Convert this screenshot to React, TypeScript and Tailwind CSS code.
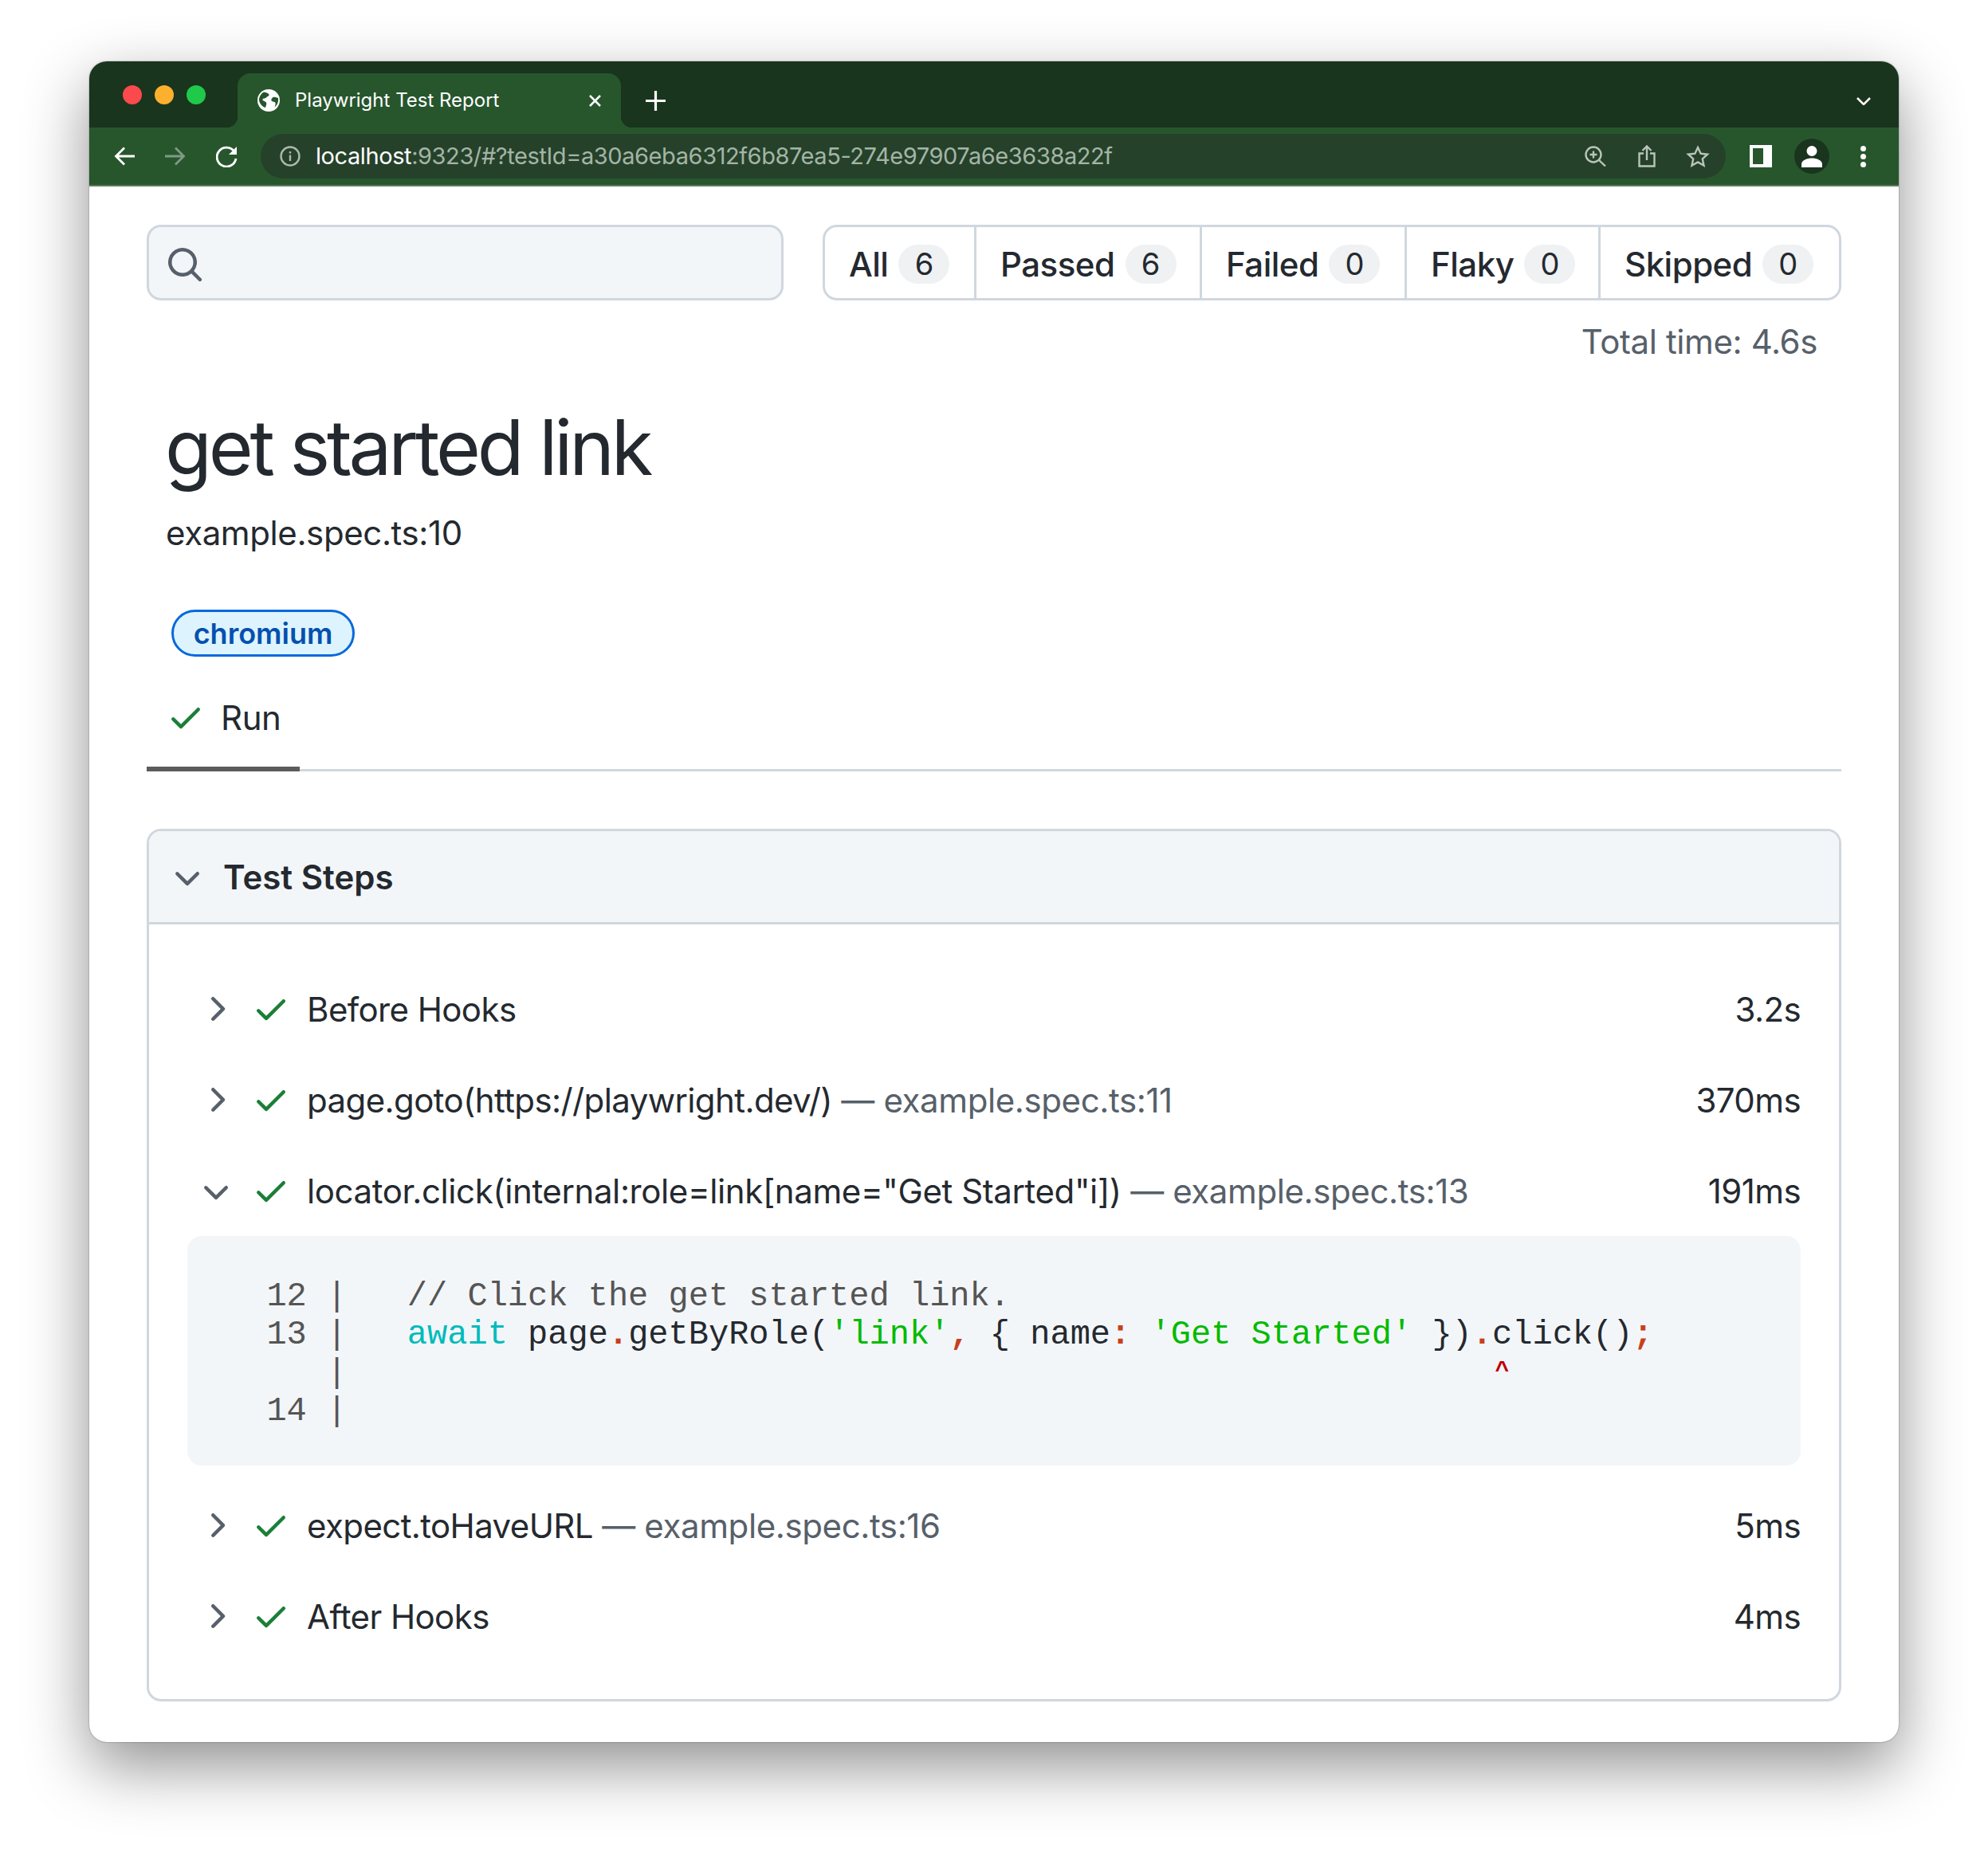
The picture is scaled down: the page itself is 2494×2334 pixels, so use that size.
const SANS = "font-['Inter','Noto_Sans',sans-serif]";

const checkPath =
  "M13.78 4.22a.75.75 0 010 1.06l-7.25 7.25a.75.75 0 01-1.06 0L2.22 9.28a.75.75 0 011.06-1.06L6 10.94l6.72-6.72a.75.75 0 011.06 0z";
const chevronRightPath =
  "M6.22 3.22a.75.75 0 011.06 0l4.25 4.25a.75.75 0 010 1.06l-4.25 4.25a.75.75 0 01-1.06-1.06L9.94 8 6.22 4.28a.75.75 0 010-1.06z";
const chevronDownPath =
  "M12.78 6.22a.75.75 0 010 1.06l-4.25 4.25a.75.75 0 01-1.06 0L3.22 7.28a.75.75 0 011.06-1.06L8 9.94l3.72-3.72a.75.75 0 011.06 0z";
const searchPath =
  "M11.5 7a4.5 4.5 0 11-9 0 4.5 4.5 0 019 0zm-.82 4.74a6 6 0 111.06-1.06l3.04 3.04a.75.75 0 11-1.06 1.06l-3.04-3.04z";

const Octicon = ({ d, className }: { d: string; className: string }) => (
  <svg viewBox="0 0 16 16" fill="currentColor" className={`h-12 w-12 shrink-0 ${className}`}>
    <path fillRule="evenodd" d={d} />
  </svg>
);

const filters = [
  { label: "All", count: 6, width: "w-[187px]" },
  { label: "Passed", count: 6, width: "w-[283px]" },
  { label: "Failed", count: 0, width: "w-[257px]" },
  { label: "Flaky", count: 0, width: "w-[243px]" },
  { label: "Skipped", count: 0, width: "flex-1" },
];

const BrowserChrome = () => (
  <div className={`shrink-0 ${SANS}`}>
    <div className="flex h-[83px] bg-[#19351d]">
      <div className="flex h-[84px] w-[186px] shrink-0 items-center gap-4 pl-[42px]">
        <span className="h-6 w-6 rounded-full bg-[#fb4a4e]" />
        <span className="h-6 w-6 rounded-full bg-[#fdb02e]" />
        <span className="h-6 w-6 rounded-full bg-[#1fc94a]" />
      </div>
      <div className="relative mt-[15px] flex h-[68px] w-[481px] items-center rounded-t-[16px] bg-[#27562d] pl-[25px] pr-6 text-white">
        <span className="absolute bottom-0 left-[-14px] h-[14px] w-[14px] bg-[radial-gradient(circle_at_0_0,#19351d_14px,#27562d_14.5px)]" />
        <span className="absolute bottom-0 right-[-14px] h-[14px] w-[14px] bg-[radial-gradient(circle_at_100%_0,#19351d_14px,#27562d_14.5px)]" />
        <svg viewBox="0 0 28 28" className="h-7 w-7 shrink-0">
          <circle cx="14" cy="14" r="14" fill="#fff" />
          <path d="M8 3.500c3 .5 5 1 6.500 3 .5 2-1.500 2-3 3.500-1.500 2-4 1-5 2.500-.5 2 3 2.500 4.500 4 1 2-.5 4-1 6.500-4-1-7.500-5-8-9.500C2 9.500 4.500 5.500 8 3.500z" fill="#27562d" />
          <path d="M26 11c-2-.5-4-2-6.500-1-1.500 1.500-3 3-1.500 5 2 1 4 .5 4.500 2 .5 2-.5 4-1 5.500 2.500-2 5-5 4.500-11.500z" fill="#27562d" />
        </svg>
        <span className="ml-[19px] whitespace-nowrap text-[24px]">Playwright Test Report</span>
        <svg viewBox="0 0 17 15" className="ml-auto h-[15px] w-[17px]" stroke="#fff" strokeWidth="2.500">
          <path d="M2 1l13 13M15 1L2 14" />
        </svg>
      </div>
      <svg viewBox="0 0 25 25" className="ml-[31px] mt-[37px] h-[25px] w-[25px]" stroke="#fff" strokeWidth="3.200">
        <path d="M12.500 0v25M0 12.500h25" />
      </svg>
      <svg viewBox="0 0 18 10" fill="none" className="ml-auto mr-[35px] mt-[45px] h-[10px] w-[18px]" stroke="#fff" strokeWidth="2.500">
        <path d="M1 1l8 8 8-8" />
      </svg>
    </div>
    <div className="flex h-[74px] items-center border-b-2 border-[#5b7a5f] bg-[#27562d] pl-[31px]">
      <svg viewBox="0 0 26 24" fill="none" className="h-6 w-[26px] shrink-0" stroke="#fff" strokeWidth="2.800">
        <path d="M26 12H3M13 1.500L2.500 12 13 22.500" />
      </svg>
      <svg viewBox="0 0 26 24" fill="none" className="ml-[38px] h-6 w-[26px] shrink-0" stroke="#7f9a83" strokeWidth="2.800">
        <path d="M0 12h23M13 1.500L23.500 12 13 22.500" />
      </svg>
      <svg viewBox="0 0 27 27" fill="none" className="ml-[38px] h-[27px] w-[27px] shrink-0">
        <path d="M22.500 6.500A12 12 0 1 0 25 16" stroke="#fff" strokeWidth="2.800" />
        <path d="M26 1v10H16z" fill="#fff" />
      </svg>
      <div className="ml-[29px] flex h-14 w-[1838px] shrink-0 items-center rounded-full bg-[#26412a] pl-6 pr-5">
        <svg viewBox="0 0 26 26" fill="none" className="h-[26px] w-[26px] shrink-0" stroke="#aab9ad" strokeWidth="2.400">
          <circle cx="13" cy="13" r="11.500" />
          <path d="M13 11.500v7.500M13 7v2.500" />
        </svg>
        <span className="ml-[19px] whitespace-nowrap text-[29px] tracking-[-0.42px] text-[#a3b5a6]">
          <span className="text-white">localhost</span>:9323/#?testId=a30a6eba6312f6b87ea5-274e97907a6e3638a22f
        </span>
        <svg viewBox="0 0 27 26" fill="none" className="ml-auto h-[26px] w-[27px] shrink-0" stroke="#b9c5bb" strokeWidth="2.400">
          <circle cx="11" cy="11" r="9.500" />
          <path d="M17.500 17.500L26 25.500M11 6.500v9M6.500 11h9" />
        </svg>
        <svg viewBox="0 0 22 28" fill="none" className="ml-10 h-7 w-[22px] shrink-0" stroke="#b9c5bb" strokeWidth="2.400">
          <path d="M7 10.500H1.500v16h19v-16H15M11 19V2M5.500 7L11 1.500 16.500 7" />
        </svg>
        <svg viewBox="0 0 30 28" fill="none" className="ml-[38px] h-7 w-[30px] shrink-0" stroke="#b9c5bb" strokeWidth="2.400">
          <path d="M15 3l3.600 7.700 8.400 1-6.200 5.700 1.700 8.300-7.500-4.200-7.500 4.200 1.700-8.300L3 11.700l8.400-1z" />
        </svg>
      </div>
      <span className="ml-[30px] h-7 w-7 shrink-0 bg-white py-1 pl-1">
        <span className="block h-full w-[13px] bg-[#27562d]" />
      </span>
      <span className="ml-7 flex h-11 w-11 shrink-0 items-center justify-center rounded-full bg-[#19351d]">
        <svg viewBox="0 0 26 28" fill="#fff" className="h-7 w-[26px]">
          <circle cx="13" cy="7.500" r="6.500" />
          <path d="M0 28v-4c0-5 7-7.500 13-7.500s13 2.500 13 7.500v4z" />
        </svg>
      </span>
      <span className="ml-[39px] flex flex-col gap-[3px]">
        <span className="h-[7px] w-[7px] rounded-full bg-white" />
        <span className="h-[7px] w-[7px] rounded-full bg-white" />
        <span className="h-[7px] w-[7px] rounded-full bg-white" />
      </span>
    </div>
  </div>
);

const FilterBar = () => (
  <div className="flex gap-[49px]">
    <div className="flex h-[95px] w-[799px] items-center rounded-[18px] border-[3px] border-[#d0d7de] bg-[#f3f6f9] pl-[21px] pt-1 text-[#57606a]">
      <Octicon d={searchPath} className="" />
    </div>
    <div className="flex h-[95px] flex-1 rounded-[18px] border-[3px] border-[#d0d7de]">
      {filters.map((filter, index) => (
        <div
          key={filter.label}
          className={`flex items-center pl-[30px] pt-1 ${filter.width} ${index > 0 ? "border-l-[3px] border-[#d0d7de]" : ""}`}
        >
          <span className="text-[42px] font-medium tracking-[-0.5px] text-[#24292f]">{filter.label}</span>
          <span className="ml-[13px] flex h-[49px] w-[64px] items-center justify-center rounded-full bg-[#eff1f3] text-[38px] text-[#24292f]">
            {filter.count}
          </span>
        </div>
      ))}
    </div>
  </div>
);

interface IStepRow {
  title: string;
  location?: string;
  time: string;
  open?: boolean;
}

const StepRow = ({ title, location, time, open }: IStepRow) => (
  <div className="flex h-[114px] items-center pl-3 tracking-[-0.6px]">
    <Octicon d={open ? chevronDownPath : chevronRightPath} className="text-[#57606a]" />
    <Octicon d={checkPath} className="ml-[21px] text-[#1a7f37]" />
    <span className={`ml-[21px] whitespace-nowrap ${open ? "tracking-[-0.4px]" : ""}`}>
      {title}
      {location && <span className="tracking-[-0.4px] text-[#57606a]"> — {location}</span>}
    </span>
    <span className="ml-auto">{time}</span>
  </div>
);

const P = ({ children }: { children: string }) => <span className="font-bold text-[#c7401a]">{children}</span>;
const G = ({ children }: { children: string }) => <span className="text-[#555555]">{children}</span>;
const S = ({ children }: { children: string }) => <span className="text-[#00bb00]">{children}</span>;

const CodeFrame = () => (
  <pre className="mb-[18px] h-[288px] rounded-[18px] bg-[#f3f6f9] pl-[49px] pt-[52px] font-['Liberation_Mono',monospace] text-[42px] leading-[48px] text-[#24292f]">
    <G>{"  12 |   // Click the get started link."}</G>
    {"\n"}
    <G>{"  13 | "}</G>
    {"  "}
    <span className="text-[#00bbbb]">await</span>
    {" page"}
    <P>.</P>
    {"getByRole("}
    <S>'link'</S>
    <P>,</P>
    {" { name"}
    <P>:</P>
    {" "}
    <S>'Get Started'</S>
    {" })"}
    <P>.</P>
    {"click()"}
    <P>;</P>
    {"\n"}
    <G>{"     |"}</G>
    {"                                                         "}
    <span className="inline-block h-[48px] w-[25.2px] text-center align-top text-[30px] font-bold leading-[42px] text-[#bb0000]">
      ^
    </span>
    {"\n"}
    <G>{"  14 |"}</G>
  </pre>
);

const TestSteps = () => (
  <div className="mt-[72px] h-[1095px] overflow-hidden rounded-[18px] border-[3px] border-[#d0d7de]">
    <div className="flex h-[117px] items-center border-b-[3px] border-[#d0d7de] bg-[#f3f6f9] pl-6 text-[42px] font-semibold text-[#24292f]">
      <Octicon d={chevronDownPath} className="text-[#57606a]" />
      <span className="ml-[21px]">Test Steps</span>
    </div>
    <div className="ml-12 mr-12 pt-[49px] text-[42px] text-[#24292f]">
      <StepRow title="Before Hooks" time="3.2s" />
      <StepRow title="page.goto(https://playwright.dev/)" location="example.spec.ts:11" time="370ms" />
      <StepRow
        title={'locator.click(internal:role=link[name="Get Started"i])'}
        location="example.spec.ts:13"
        time="191ms"
        open
      />
      <CodeFrame />
      <StepRow title="expect.toHaveURL" location="example.spec.ts:16" time="5ms" />
      <StepRow title="After Hooks" time="4ms" />
    </div>
  </div>
);

export default function App() {
  return (
    <div className="h-[2334px] w-[2494px] overflow-hidden bg-white pl-[112px] pt-[77px]">
      <div className="flex h-[2109px] w-[2270px] flex-col overflow-hidden rounded-[22px] bg-white shadow-[0_0_2px_rgba(0,0,0,0.45),0_30px_80px_rgba(0,0,0,0.44)]">
        <BrowserChrome />
        <main className={`px-[72px] pt-12 ${SANS}`}>
          <FilterBar />
          <div className="mt-5 pr-[30px] text-right text-[42px] leading-[63px] tracking-[-0.4px] text-[#57606a]">
            Total time: 4.6s
          </div>
          <h1 className="ml-[23px] mt-[41px] text-[96px] font-normal leading-[120px] tracking-[-4.2px] text-[#24292f]">
            get started link
          </h1>
          <div className="ml-6 mt-4 text-[42px] leading-[63px] tracking-[-0.4px] text-[#24292f]">
            example.spec.ts:10
          </div>
          <span className="ml-[31px] mt-[65px] flex h-[59px] w-[230px] items-center justify-center rounded-full border-[3px] border-[#0969da] bg-[#ddf4ff] text-[36px] font-semibold text-[#0550ae]">
            chromium
          </span>
          <div className="border-b-[3px] border-[#d0d7de] pt-[15px]">
            <div className="-mb-[3px] flex h-[129px] w-[192px] items-center border-b-[6px] border-[#5c5c5c] pb-px pl-[25px] text-[42px] text-[#24292f]">
              <Octicon d={checkPath} className="text-[#1a7f37]" />
              <span className="ml-5 tracking-[-0.4px]">Run</span>
            </div>
          </div>
          <TestSteps />
        </main>
      </div>
    </div>
  );
}
